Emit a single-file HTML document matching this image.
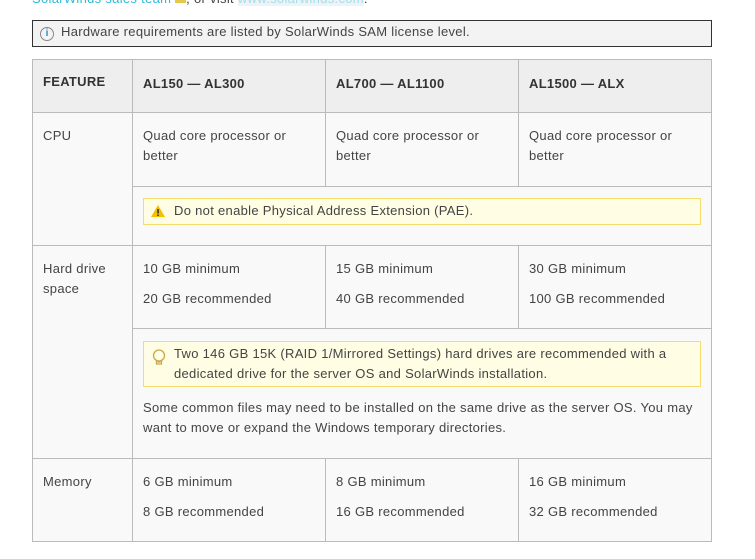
<!DOCTYPE html>
<html><head><meta charset="utf-8"><style>
body{margin:0;width:755px;height:559px;background:#fff;font-family:"Liberation Sans",sans-serif;font-size:13px;letter-spacing:0.3px;color:#444;position:relative;overflow:hidden}
.a{position:absolute}
.c{position:absolute;background:#f9f9f9;border-left:1px solid #bbb;border-top:1px solid #bbb;box-sizing:border-box;padding:0 10px;line-height:20px}
.h{background:#eee;font-weight:bold;color:#333}
.note{position:absolute;background:#fffde3;border:1px solid #f5dc6e;box-sizing:border-box;line-height:20px;padding:0 0 0 30px}
</style></head><body>
<div class="a" style="left:32px;top:-9px;color:#2bbbd8">SolarWinds sales team <span style="display:inline-block;width:11px;height:8px;background:#e6c84a"></span><span style="color:#444">, or visit </span><span style="background:#eef4f6;color:#9fe0ee">www.solarwinds.com</span><span style="color:#444">.</span></div>
<div class="a" style="left:32px;top:20px;width:680px;height:27px;border:1px solid #333;box-sizing:border-box;background:#f3f3f3;line-height:22px;padding-left:28px">Hardware requirements are listed by SolarWinds SAM license level.
<span class="a" style="left:7px;top:6px;width:14px;height:14px;border:1px solid #888;border-radius:50%;box-sizing:border-box;color:#2a8cc6;font-size:10px;font-weight:bold;line-height:12px;text-align:center;letter-spacing:0">i</span></div>

<div class="a" style="left:32px;top:59px;width:680px;height:483px;border-right:1px solid #bbb;border-bottom:1px solid #bbb;box-sizing:border-box"></div>
<div class="c h" style="left:32px;top:59px;width:100px;height:53px;padding-top:12px">FEATURE</div>
<div class="c h" style="left:132px;top:59px;width:193px;height:53px;padding-top:14px">AL150 — AL300</div>
<div class="c h" style="left:325px;top:59px;width:193px;height:53px;padding-top:14px">AL700 — AL1100</div>
<div class="c h" style="left:518px;top:59px;width:193px;height:53px;padding-top:14px">AL1500 — ALX</div>
<div class="c" style="left:32px;top:112px;width:100px;height:133px;padding-top:13px">CPU</div>
<div class="c" style="left:132px;top:112px;width:193px;height:74px;padding-top:13px">Quad core processor or better</div>
<div class="c" style="left:325px;top:112px;width:193px;height:74px;padding-top:13px">Quad core processor or better</div>
<div class="c" style="left:518px;top:112px;width:193px;height:74px;padding-top:13px">Quad core processor or better</div>
<div class="c" style="left:132px;top:186px;width:579px;height:59px"></div>
<div class="note" style="left:143px;top:198px;width:558px;height:27px;padding-top:2px">Do not enable Physical Address Extension (PAE).
<svg class="a" style="left:6px;top:5px" width="16" height="14" viewBox="0 0 16 14"><path d="M8 1L15 13H1Z" fill="#f5c000"/><rect x="7.2" y="5" width="1.6" height="4.5" fill="#333"/><rect x="7.2" y="10.5" width="1.6" height="1.5" fill="#333"/></svg></div>
<div class="c" style="left:32px;top:245px;width:100px;height:213px;padding-top:13px">Hard drive space</div>
<div class="c" style="left:132px;top:245px;width:193px;height:83px;padding-top:13px">10 GB minimum<br><div style="height:10px"></div>20 GB recommended</div>
<div class="c" style="left:325px;top:245px;width:193px;height:83px;padding-top:13px">15 GB minimum<br><div style="height:10px"></div>40 GB recommended</div>
<div class="c" style="left:518px;top:245px;width:193px;height:83px;padding-top:13px">30 GB minimum<br><div style="height:10px"></div>100 GB recommended</div>
<div class="c" style="left:132px;top:328px;width:579px;height:130px;padding-top:69px">Some common files may need to be installed on the same drive as the server OS. You may<br>want to move or expand the Windows temporary directories.</div>
<div class="note" style="left:143px;top:341px;width:558px;height:46px;padding-top:2px">Two 146 GB 15K (RAID 1/Mirrored Settings) hard drives are recommended with a dedicated drive for the server OS and SolarWinds installation.
<svg class="a" style="left:8px;top:7px" width="14" height="18" viewBox="0 0 14 18"><circle cx="7" cy="6.5" r="5.5" fill="none" stroke="#c8a84a" stroke-width="1.3"/><path d="M4.5 11v4h5v-4M5.5 13h3" fill="none" stroke="#c8a84a" stroke-width="1.3"/></svg></div>
<div class="c" style="left:32px;top:458px;width:100px;height:84px;padding-top:13px">Memory</div>
<div class="c" style="left:132px;top:458px;width:193px;height:84px;padding-top:13px">6 GB minimum<br><div style="height:10px"></div>8 GB recommended</div>
<div class="c" style="left:325px;top:458px;width:193px;height:84px;padding-top:13px">8 GB minimum<br><div style="height:10px"></div>16 GB recommended</div>
<div class="c" style="left:518px;top:458px;width:193px;height:84px;padding-top:13px">16 GB minimum<br><div style="height:10px"></div>32 GB recommended</div>
<div class="a" style="left:32px;top:541px;width:680px;height:1px;background:#bbb"></div>
<div class="a" style="left:711px;top:59px;width:1px;height:483px;background:#bbb"></div>
</body></html>
